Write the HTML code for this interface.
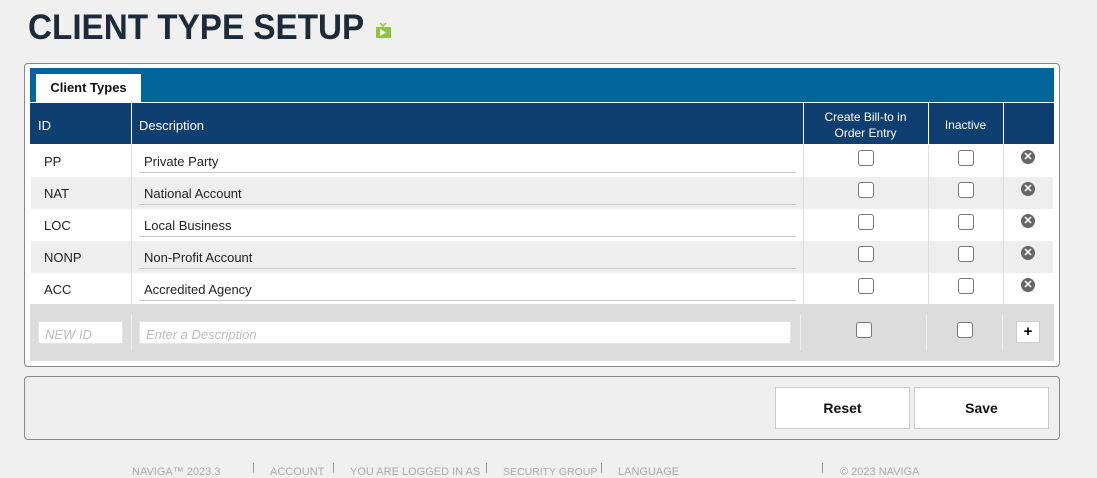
<!DOCTYPE html>
<html><head><style>
*{box-sizing:border-box;margin:0;padding:0}
body{width:1097px;height:472px;overflow:hidden;background:#f0f0f0;font-family:"Liberation Sans",sans-serif;position:relative;font-size:13px;color:#222}
.a{position:absolute}
h1{position:absolute;left:28px;top:8px;font-size:35px;font-weight:bold;color:#1c2a3a;letter-spacing:0;transform:scaleX(0.95);transform-origin:left top;white-space:nowrap}
.cb{position:absolute;width:16px;height:16px;border:1.5px solid #777;border-radius:3px;background:#fff}
.x{position:absolute;width:14px;height:14px;border-radius:50%;background:#666;color:#fff;font-size:11px;font-weight:bold;line-height:14px;text-align:center}
.row{position:absolute;left:31px;width:1022px;height:32px}
.id{position:absolute;left:13px;top:9px}
.ds{position:absolute;left:108px;width:657px;top:0;height:28px;border-bottom:1px solid #c8c8c8;padding:9px 0 0 5px}
.vl{position:absolute;top:0;width:1px;height:32px;background:#ddd}
.btn{position:absolute;top:387px;height:42px;width:135px;background:#fff;border:1px solid #ccc;font-weight:bold;font-size:14px;text-align:center;line-height:40px;color:#111}
.ft{position:absolute;top:466px;font-size:11px;color:#aaa}
.fs{position:absolute;top:463px;width:1px;height:10px;background:#999}
</style></head><body>
<h1>CLIENT TYPE SETUP</h1>
<svg class="a" style="left:375px;top:22px" width="17" height="17" viewBox="0 0 17 17"><path d="M5 1l3 3 3-3" stroke="#8dc63f" fill="none" stroke-width="1.5"/><rect x="1" y="5" width="15" height="11" fill="#8dc63f"/><path d="M5 7l6 3.5-6 3.5z" fill="#fff"/></svg>

<div class="a" style="left:24px;top:63px;width:1036px;height:304px;border:1px solid #888;border-radius:4px;background:#fff"></div>
<div class="a" style="left:30px;top:68px;width:1024px;height:34px;background:#006699"></div>
<div class="a" style="left:36px;top:74px;width:105px;height:28px;background:#fff;font-weight:bold;text-align:center;line-height:28px;color:#111">Client Types</div>
<div class="a" style="left:30px;top:103px;width:1024px;height:41px;background:#0e3f70;color:#fff"></div>
<div class="a" style="left:131px;top:103px;width:1px;height:41px;background:#fff"></div>
<div class="a" style="left:803px;top:103px;width:1px;height:41px;background:#fff"></div>
<div class="a" style="left:928px;top:103px;width:1px;height:41px;background:#fff"></div>
<div class="a" style="left:1003px;top:103px;width:1px;height:41px;background:#fff"></div>
<div class="a" style="left:38px;top:118px;color:#fff">ID</div>
<div class="a" style="left:139px;top:118px;color:#fff">Description</div>
<div class="a" style="left:803px;top:109px;width:125px;text-align:center;color:#fff;font-size:12px;line-height:16px">Create Bill-to in<br>Order Entry</div>
<div class="a" style="left:928px;top:118px;width:75px;text-align:center;color:#fff;font-size:12px">Inactive</div>

<div class="row" style="top:145px;background:#fff"><div class="id">PP</div><div class="ds">Private Party</div><div class="vl" style="left:100px"></div><div class="vl" style="left:772px"></div><div class="vl" style="left:897px"></div><div class="vl" style="left:972px"></div><div class="cb" style="left:827px;top:5px"></div><div class="cb" style="left:927px;top:5px"></div><div class="x" style="left:990px;top:5px">✕</div></div>
<div class="row" style="top:177px;background:#eee"><div class="id">NAT</div><div class="ds">National Account</div><div class="vl" style="left:100px"></div><div class="vl" style="left:772px"></div><div class="vl" style="left:897px"></div><div class="vl" style="left:972px"></div><div class="cb" style="left:827px;top:5px"></div><div class="cb" style="left:927px;top:5px"></div><div class="x" style="left:990px;top:5px">✕</div></div>
<div class="row" style="top:209px;background:#fff"><div class="id">LOC</div><div class="ds">Local Business</div><div class="vl" style="left:100px"></div><div class="vl" style="left:772px"></div><div class="vl" style="left:897px"></div><div class="vl" style="left:972px"></div><div class="cb" style="left:827px;top:5px"></div><div class="cb" style="left:927px;top:5px"></div><div class="x" style="left:990px;top:5px">✕</div></div>
<div class="row" style="top:241px;background:#eee"><div class="id">NONP</div><div class="ds">Non-Profit Account</div><div class="vl" style="left:100px"></div><div class="vl" style="left:772px"></div><div class="vl" style="left:897px"></div><div class="vl" style="left:972px"></div><div class="cb" style="left:827px;top:5px"></div><div class="cb" style="left:927px;top:5px"></div><div class="x" style="left:990px;top:5px">✕</div></div>
<div class="row" style="top:273px;background:#fff"><div class="id">ACC</div><div class="ds">Accredited Agency</div><div class="vl" style="left:100px"></div><div class="vl" style="left:772px"></div><div class="vl" style="left:897px"></div><div class="vl" style="left:972px"></div><div class="cb" style="left:827px;top:5px"></div><div class="cb" style="left:927px;top:5px"></div><div class="x" style="left:990px;top:5px">✕</div></div>

<div class="a" style="left:30px;top:304px;width:1024px;height:57px;background:#dcdcdc"></div>
<div class="a" style="left:131px;top:315px;width:1px;height:36px;background:#eee"></div>
<div class="a" style="left:800px;top:315px;width:1px;height:36px;background:#eee"></div>
<div class="a" style="left:926px;top:315px;width:1px;height:36px;background:#eee"></div>
<div class="a" style="left:1002px;top:315px;width:1px;height:36px;background:#eee"></div>
<div class="a" style="left:38px;top:321px;width:85px;height:23px;background:#fff;border:1px solid #e4e4e4;color:#bbb;font-style:italic;padding:5px 6px">NEW ID</div>
<div class="a" style="left:139px;top:321px;width:652px;height:23px;background:#fff;border:1px solid #e4e4e4;color:#bbb;font-style:italic;padding:5px 6px">Enter a Description</div>
<div class="cb" style="left:856px;top:322px"></div>
<div class="cb" style="left:957px;top:322px"></div>
<div class="a" style="left:1016px;top:321px;width:24px;height:22px;background:#fff;border:1px solid #ccc;text-align:center;font-weight:bold;line-height:20px;font-size:15px;color:#000">+</div>

<div class="a" style="left:24px;top:376px;width:1036px;height:64px;border:1px solid #888;border-radius:4px;background:#efefef"></div>
<div class="btn" style="left:775px">Reset</div>
<div class="btn" style="left:914px">Save</div>

<div class="ft" style="left:132px">NAVIGA™ 2023.3</div><div class="fs" style="left:253px"></div>
<div class="ft" style="left:270px">ACCOUNT</div><div class="fs" style="left:333px"></div>
<div class="ft" style="left:350px">YOU ARE LOGGED IN AS</div><div class="fs" style="left:486px"></div>
<div class="ft" style="left:503px;font-size:10.5px">SECURITY GROUP</div><div class="fs" style="left:601px"></div>
<div class="ft" style="left:618px">LANGUAGE</div><div class="fs" style="left:822px"></div>
<div class="ft" style="left:840px">© 2023 NAVIGA</div>
</body></html>
